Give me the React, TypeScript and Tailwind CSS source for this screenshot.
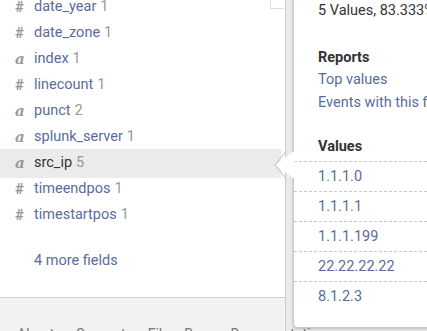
const fields = [
  { type: "num", name: "date_year", count: 1 },
  { type: "num", name: "date_zone", count: 1 },
  { type: "str", name: "index", count: 1 },
  { type: "num", name: "linecount", count: 1 },
  { type: "str", name: "punct", count: 2 },
  { type: "str", name: "splunk_server", count: 1 },
  { type: "str", name: "src_ip", count: 5, selected: true },
  { type: "num", name: "timeendpos", count: 1 },
  { type: "num", name: "timestartpos", count: 1 },
];

const values = ["1.1.1.0", "1.1.1.1", "1.1.1.199", "22.22.22.22", "8.1.2.3"];

function FieldIcon({ type }: { type: string }) {
  if (type === "num") {
    return (
      <span className="relative w-[19px] text-[15px] font-bold text-[#999]">#</span>
    );
  }
  return (
    <span className="relative w-[19px] font-['DejaVu_Serif',serif] text-[15px] font-bold italic text-[#9a9a9a]">
      a
    </span>
  );
}

export default function App() {
  return (
    <div className="relative h-[331px] w-[427px] overflow-hidden bg-[#eaeaea] font-['Roboto',sans-serif]">
      <div className="flex h-full w-[286px] flex-col border-r border-[#cfcfcf] bg-white">
        <div className="flex-1">
          <ul className="-mt-[6px]">
            {fields.map((f) => (
              <li
                key={f.name}
                className="relative flex h-[26px] w-[281px] items-center pl-[15px] text-[14.5px]"
              >
                {f.selected && (
                  <span className="absolute inset-x-0 top-[-1px] bottom-[-2px] bg-[#ebebeb]" />
                )}
                <FieldIcon type={f.type} />
                <span
                  className={
                    "relative " + (f.selected ? "text-[#333]" : "text-[#5a6c9c]")
                  }
                >
                  {f.name}
                </span>
                <span className="relative ml-[4px] text-[#999]">{f.count}</span>
              </li>
            ))}
          </ul>
          <div className="mt-[22px] pl-[34px] text-[14.5px] text-[#5a6c9c]">
            4 more fields
          </div>
        </div>
        <footer className="flex h-[34px] gap-[22px] border-t border-[#d0d0d0] bg-[#f2f2f2] pl-[17px] pt-[26px] text-[14px] whitespace-nowrap text-[#777]">
          <span>About</span>
          <span>Support</span>
          <span>File a Bug</span>
          <span>Documentation</span>
        </footer>
      </div>

      <div className="absolute left-[270px] top-0 h-[9px] w-[14px] border-b border-l border-[#ddd] bg-white" />

      <div className="absolute bottom-[3px] left-[293px] top-[-20px] w-[180px] rounded-[4px] border border-[#c8c8c8] bg-white shadow-[0_1px_3px_rgba(0,0,0,0.2)]">
        <div className="pt-[20px] text-[14.5px] whitespace-nowrap">
          <div className="flex h-[20px] items-center pl-[24px] text-[#333]">
            5 Values, 83.333% of events
          </div>
          <div className="mt-[26px] flex h-[22px] items-center pl-[24px] font-bold text-[#333]">
            Reports
          </div>
          <div className="flex h-[22px] items-center pl-[24px] text-[#5a6c9c]">
            Top values
          </div>
          <div className="flex h-[24px] items-center pl-[24px] text-[#5a6c9c]">
            Events with this field
          </div>
          <div className="mt-[21px] flex h-[22px] items-center pl-[24px] font-bold text-[#333]">
            Values
          </div>
          <ul className="mt-[3px]">
            {values.map((v) => (
              <li
                key={v}
                className="flex h-[30px] items-center border-t border-dashed border-[#c8c8c8] pl-[24px] text-[#5a6c9c]"
              >
                {v}
              </li>
            ))}
          </ul>
        </div>
      </div>

      <svg
        className="absolute left-[274px] top-[151px]"
        width="21"
        height="28"
        viewBox="0 0 21 28"
      >
        <polygon points="20.5,0 1,14 20.5,28" fill="white" />
        <polyline
          points="12,0.5 1,14 12,27.5"
          fill="none"
          stroke="#bdbdbd"
          strokeWidth="1"
        />
      </svg>
    </div>
  );
}
